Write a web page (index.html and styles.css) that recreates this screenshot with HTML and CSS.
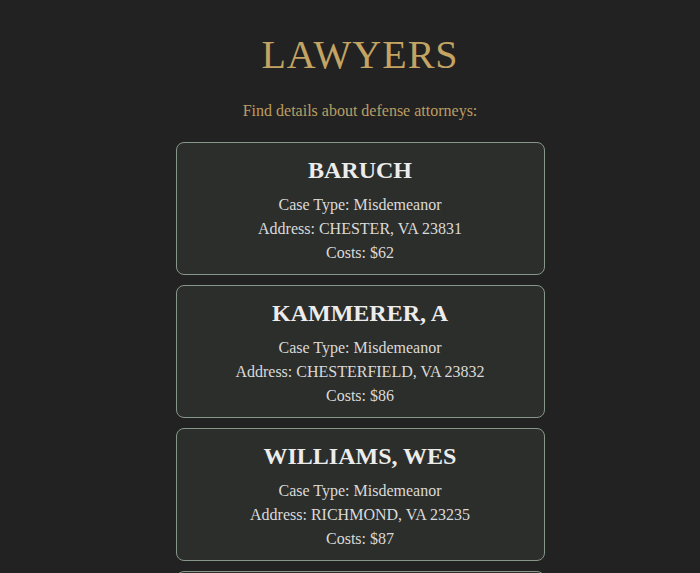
FILE: index.html
```html
<!DOCTYPE html>
<html>
<head>
<meta charset="utf-8">
<link rel="stylesheet" href="styles.css">
</head>
<body>
<div class="page">
  <h1 class="title">LAWYERS</h1>
  <p class="subtitle">Find details about defense attorneys:</p>
  <div class="list">
    <div class="card">
      <h2 class="name">BARUCH</h2>
      <p class="line">Case Type: Misdemeanor</p>
      <p class="line">Address: CHESTER, VA 23831</p>
      <p class="line">Costs: $62</p>
    </div>
    <div class="card">
      <h2 class="name">KAMMERER, A</h2>
      <p class="line">Case Type: Misdemeanor</p>
      <p class="line">Address: CHESTERFIELD, VA 23832</p>
      <p class="line">Costs: $86</p>
    </div>
    <div class="card">
      <h2 class="name">WILLIAMS, WES</h2>
      <p class="line">Case Type: Misdemeanor</p>
      <p class="line">Address: RICHMOND, VA 23235</p>
      <p class="line">Costs: $87</p>
    </div>
    <div class="card">
      <h2 class="name">SMITH, J</h2>
      <p class="line">Case Type: Misdemeanor</p>
      <p class="line">Address: RICHMOND, VA 23219</p>
      <p class="line">Costs: $90</p>
    </div>
  </div>
</div>
</body>
</html>
```
FILE: styles.css
```css
html, body {
  margin: 0;
  padding: 0;
  background: #222222;
}
body {
  font-family: "Liberation Serif", "Times New Roman", serif;
  color: #dcdcdc;
}
.page {
  padding: 31px 0 0 20px;
  display: flex;
  flex-direction: column;
  align-items: center;
}
.title {
  margin: 0;
  font-size: 40px;
  line-height: 48px;
  font-weight: normal;
  letter-spacing: 1px;
  color: #c4a462;
}
.subtitle {
  margin: 23px 0 0;
  font-size: 16px;
  line-height: 18px;
  color: #bb9e63;
}
.list {
  margin-top: 22px;
  display: flex;
  flex-direction: column;
  gap: 10px;
}
.card {
  box-sizing: border-box;
  width: 369px;
  padding: 13px 10px 9px;
  border: 1px solid #86978a;
  border-radius: 8px;
  background: #2c2e2b;
  text-align: center;
}
.name {
  margin: 0 0 8px;
  font-size: 24px;
  line-height: 29px;
  font-weight: bold;
  color: #ececec;
}
.line {
  margin: 0;
  font-size: 16px;
  line-height: 24px;
  color: #dadada;
}
```
